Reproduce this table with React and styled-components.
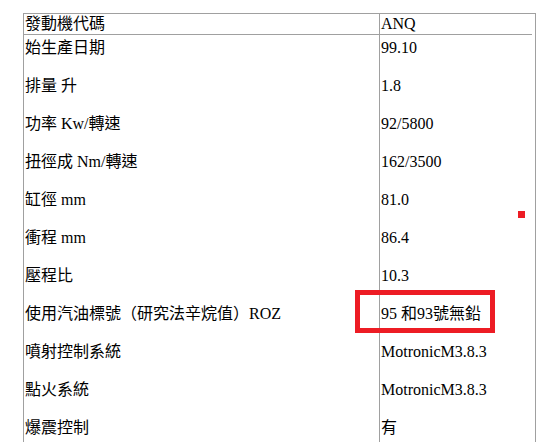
import React from 'react';
import styled, { createGlobalStyle } from 'styled-components';

const GlobalStyle = createGlobalStyle`
  html, body {
    margin: 0;
    padding: 0;
    background: #ffffff;
    overflow: hidden;
  }
  body {
    font-family: "Liberation Serif", "Noto Sans CJK TC", serif;
    font-size: 16px;
    color: #000000;
  }
`;

const Page = styled.div`
  position: relative;
  padding: 13px 0 0 23px;
`;

const SpecTable = styled.div`
  display: grid;
  grid-template-columns: 356px 152px;
  width: 511px;
  border: 1px solid #a0a0a0;
  border-bottom: none;
`;

const HeadCell = styled.div`
  height: 20px;
  line-height: 20px;
  padding-left: 1px;
  border-bottom: 1px solid #a0a0a0;
  border-right: ${(p) => (p.$first ? '1px solid #a0a0a0' : 'none')};
  white-space: nowrap;
`;

const BodyCell = styled.div`
  padding: 3px 0 0 1px;
  border-right: ${(p) => (p.$first ? '1px solid #a0a0a0' : 'none')};
  border-bottom: 1px solid #a0a0a0;
`;

const Entry = styled.div`
  line-height: 19px;
  height: 19px;
  margin-bottom: 19px;
  white-space: nowrap;
`;

const Highlight = styled.div`
  position: absolute;
  left: 355px;
  top: 290px;
  width: 140px;
  height: 43px;
  box-sizing: border-box;
  border: 5px solid #ed1c24;
`;

const Dot = styled.div`
  position: absolute;
  left: 518px;
  top: 211px;
  width: 7px;
  height: 7px;
  background: #ed1c24;
`;

const specs = [
  ['始生產日期', '99.10'],
  ['排量 升', '1.8'],
  ['功率 Kw/轉速', '92/5800'],
  ['扭徑成 Nm/轉速', '162/3500'],
  ['缸徑 mm', '81.0'],
  ['衝程 mm', '86.4'],
  ['壓程比', '10.3'],
  ['使用汽油標號（研究法辛烷值）ROZ', '95 和93號無鉛'],
  ['噴射控制系統', 'MotronicM3.8.3'],
  ['點火系統', 'MotronicM3.8.3'],
  ['爆震控制', '有'],
];

export default function App() {
  return (
    <>
      <GlobalStyle />
      <Page>
        <SpecTable>
          <HeadCell $first>發動機代碼</HeadCell>
          <HeadCell>ANQ</HeadCell>
          <BodyCell $first>
            {specs.map(([label]) => (
              <Entry key={label}>{label}</Entry>
            ))}
          </BodyCell>
          <BodyCell>
            {specs.map(([label, value]) => (
              <Entry key={label}>{value}</Entry>
            ))}
          </BodyCell>
        </SpecTable>
        <Highlight />
        <Dot />
      </Page>
    </>
  );
}
